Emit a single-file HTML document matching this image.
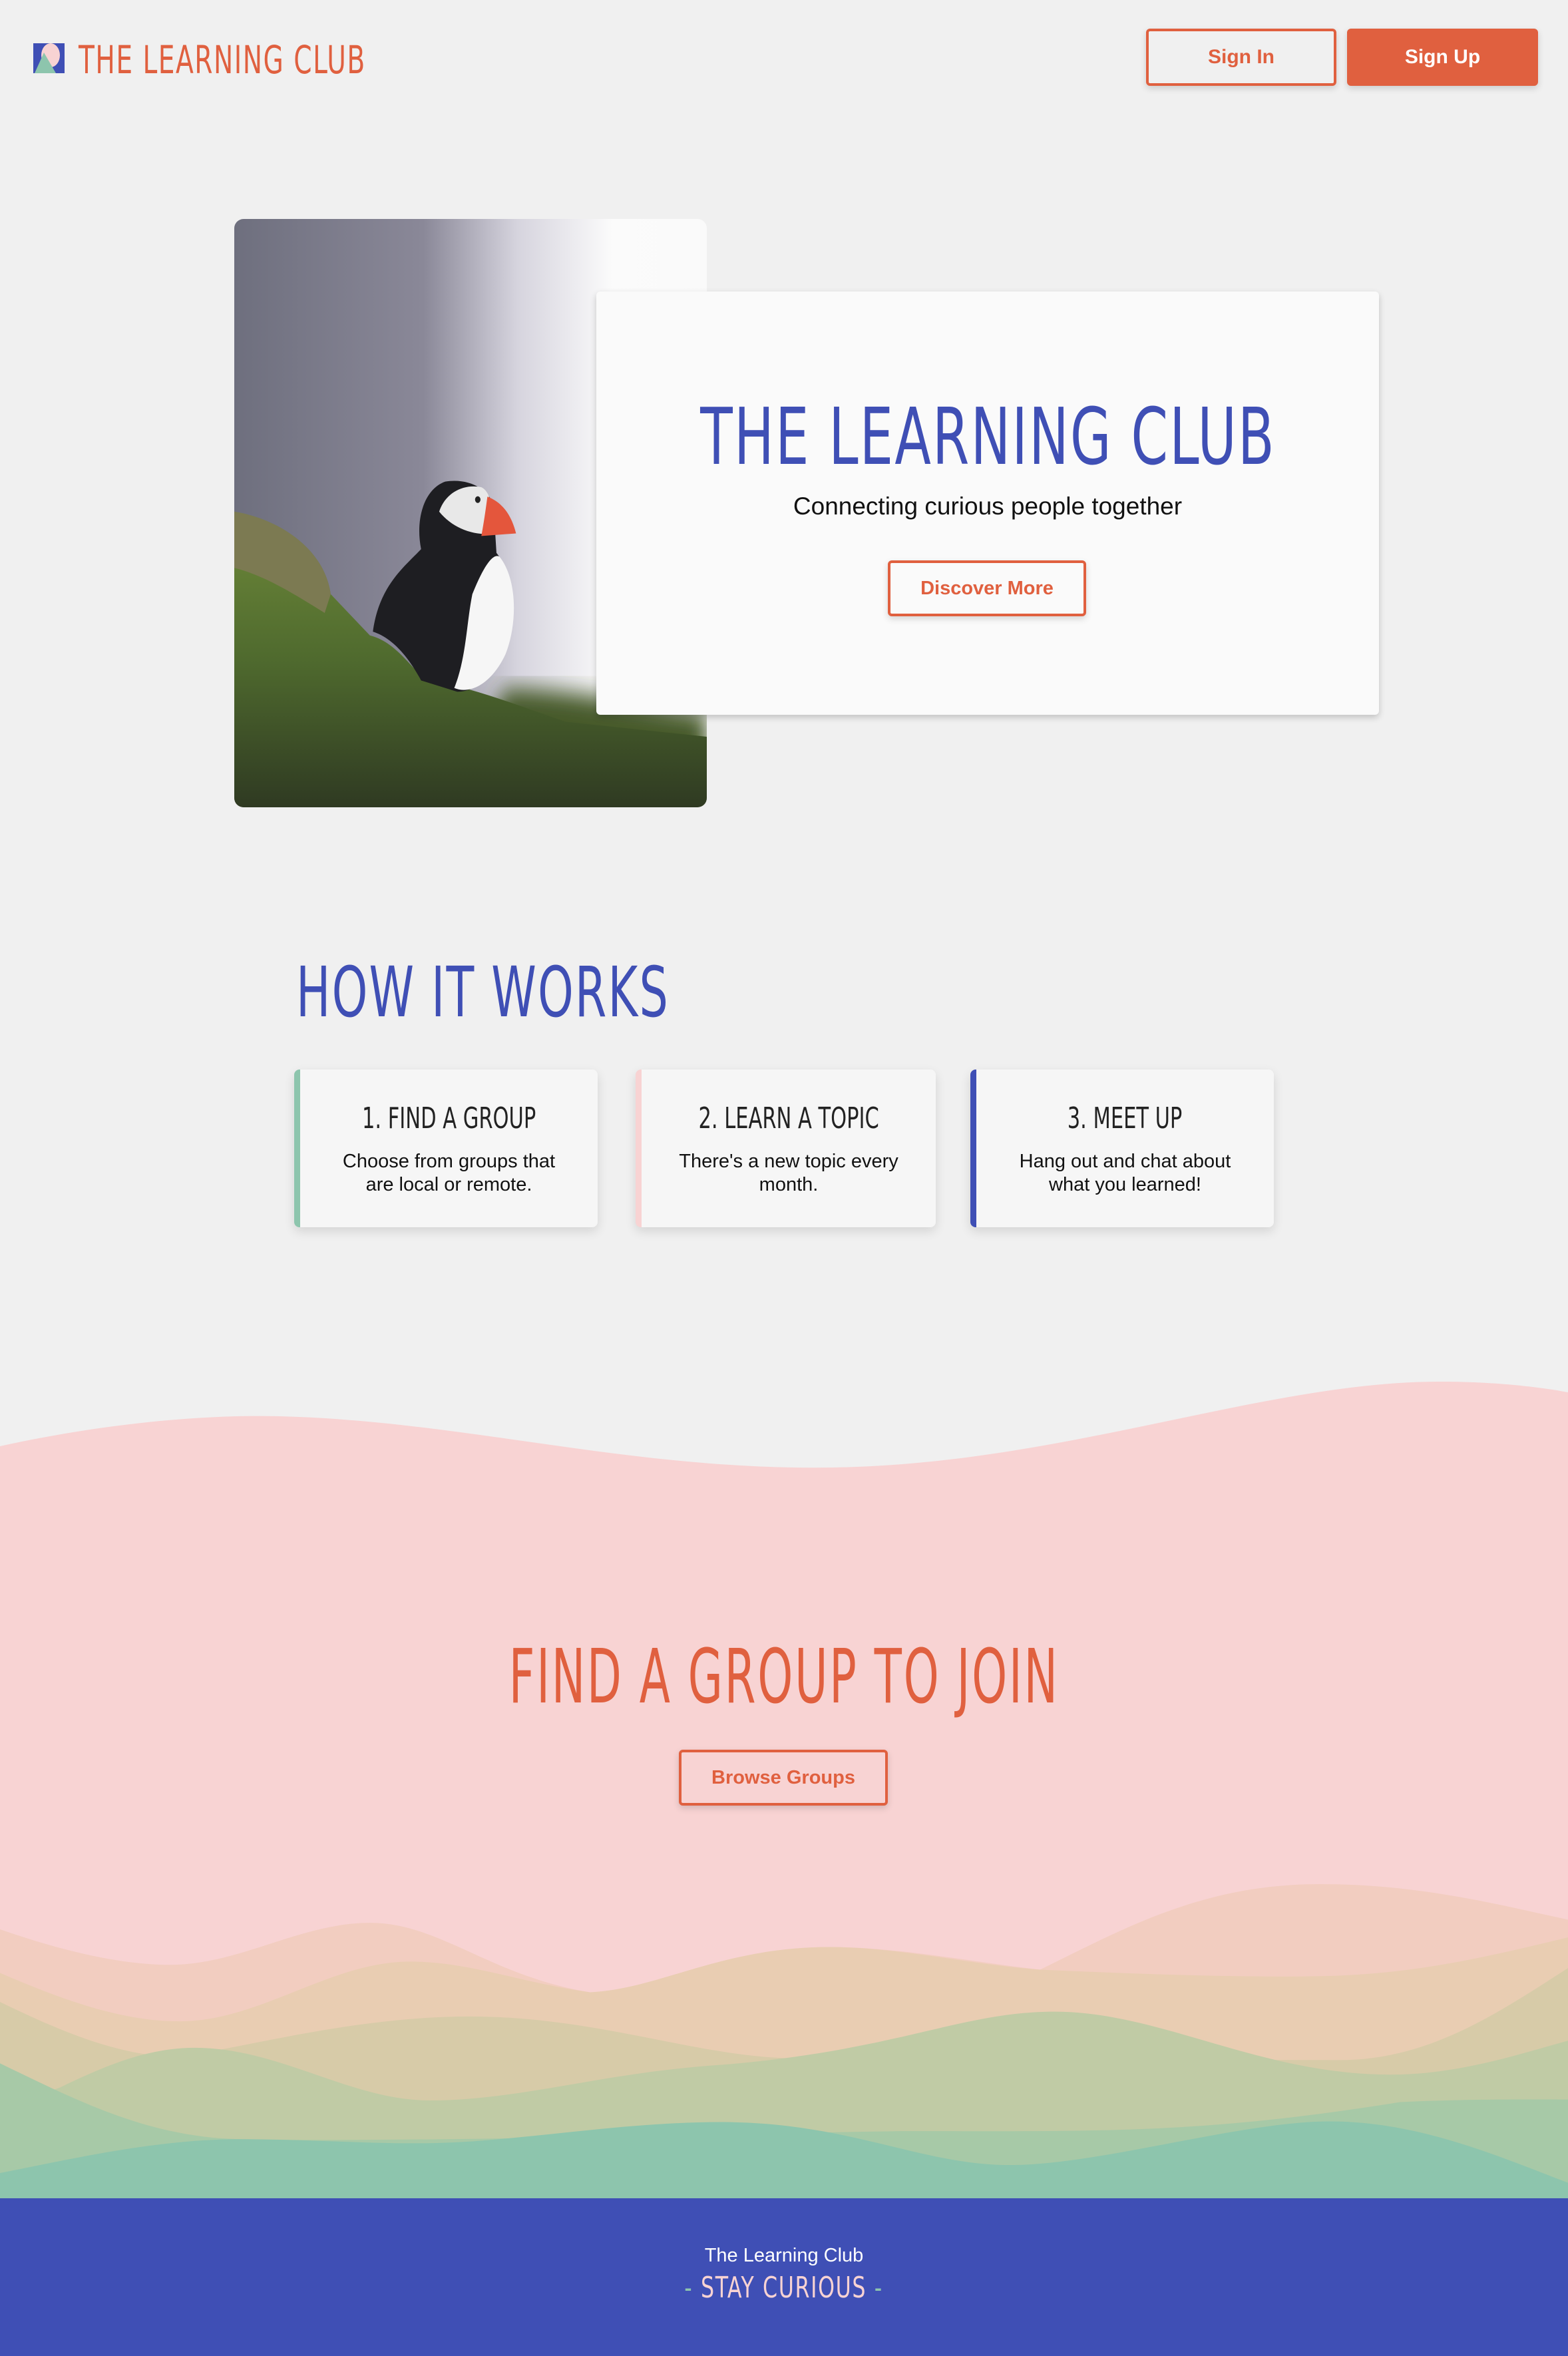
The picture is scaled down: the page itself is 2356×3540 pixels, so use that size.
<!DOCTYPE html>
<html><head><meta charset="utf-8"><style>
*{margin:0;padding:0;box-sizing:border-box}
body{width:2356px;height:3540px;background:#f0f0f0;position:relative;overflow:hidden;font-family:"Liberation Sans",sans-serif}
.disp{font-family:"DejaVu Sans Condensed","Liberation Sans",sans-serif}
.sx{display:inline-block;white-space:nowrap}
.abs{position:absolute}
.btn{position:absolute;border:4px solid #e0603f;border-radius:6px;color:#e0603f;font-weight:bold;display:flex;align-items:center;justify-content:center;box-shadow:0 4px 10px rgba(0,0,0,.15)}
.card{position:absolute;top:1607px;height:237px;background:#f6f6f6;border-radius:8px;box-shadow:0 6px 16px rgba(0,0,0,.12);text-align:center}
.card h3{font-weight:normal;font-size:44px;color:#222;margin-top:48px}
.card h3 .sx{transform:scaleX(.77)}
.card p{font-size:29px;line-height:35px;color:#111;margin-top:22px}
</style></head><body>
<!-- header -->
<svg class="abs" style="left:50px;top:65px" width="47" height="45" viewBox="0 0 47 45"><rect width="47" height="45" fill="#3f4fb5"/><ellipse cx="26" cy="18" rx="14" ry="18" fill="#f8d3d3"/><path d="M16 14 L34 45 L2 45 Z" fill="#8dc5ad"/></svg>
<div class="abs disp" style="left:118px;top:56px;font-size:58px;color:#e0603f;letter-spacing:2px"><span class="sx" style="transform:scaleX(.75);transform-origin:left">THE LEARNING CLUB</span></div>
<div class="btn" style="left:1722px;top:43px;width:286px;height:86px;font-size:30px;background:#f0f0f0">Sign In</div>
<div class="btn" style="left:2024px;top:43px;width:287px;height:86px;font-size:30px;background:#e0603f;color:#fff">Sign Up</div>
<!-- photo -->
<div class="abs" style="left:352px;top:329px;width:710px;height:884px;border-radius:14px;overflow:hidden">
<svg width="710" height="884" viewBox="0 0 1568 1568" preserveAspectRatio="none">
<defs>
<linearGradient id="bg" x1="0" y1="0" x2="1" y2="0"><stop offset="0" stop-color="#6e6f7e"/><stop offset=".4" stop-color="#8a8898"/><stop offset=".6" stop-color="#d6d4de"/><stop offset=".8" stop-color="#fbfbfb"/><stop offset="1" stop-color="#fafafa"/></linearGradient>
<linearGradient id="gr" x1="0" y1="0" x2="0" y2="1"><stop offset="0" stop-color="#6f8a3a"/><stop offset=".5" stop-color="#4f6a2e"/><stop offset="1" stop-color="#2f3a22"/></linearGradient>
<filter id="b"><feGaussianBlur stdDeviation="30"/></filter>
</defs>
<rect width="1568" height="1568" fill="url(#bg)"/>
<path d="M900 1250 C1100 1250 1400 1300 1568 1320 L1568 1568 L700 1568Z" fill="#465a2c" filter="url(#b)"/>
<path d="M0 780 C150 800 300 880 320 1000 L450 1110 C550 1130 600 1220 650 1230 C800 1250 950 1300 1100 1340 L1568 1380 L1568 1568 L0 1568Z" fill="url(#gr)"/>
<path d="M0 780 C150 800 300 880 320 1000 L300 1050 C200 1000 100 950 0 930Z" fill="#7c7a52"/>
<path d="M460 1100 C480 980 560 930 620 880 C600 800 630 720 700 700 C780 690 840 720 860 760 L870 890 C930 950 940 1050 900 1150 C860 1220 800 1260 740 1260 L620 1230 C560 1140 500 1110 460 1100Z" fill="#1e1e22"/>
<path d="M790 1000 C830 920 860 890 880 900 C940 960 940 1080 900 1160 C860 1230 790 1270 730 1250 C770 1170 770 1080 790 1000Z" fill="#f6f6f6"/>
<path d="M680 780 C700 730 760 705 820 715 C860 730 860 800 840 840 C780 840 720 820 680 780Z" fill="#e8e8e8"/>
<path d="M840 740 C890 755 920 790 935 838 L820 845 C830 800 835 770 840 740Z" fill="#e4563c"/>
<circle cx="808" cy="748" r="9" fill="#222"/>
</svg></div>
<!-- hero card -->
<div class="abs" style="left:896px;top:438px;width:1176px;height:636px;background:#fafafa;border-radius:6px;box-shadow:0 4px 10px rgba(0,0,0,.2);text-align:center">
<div class="disp" style="margin-top:158px;font-size:118px;line-height:120px;color:#3f4fb5;letter-spacing:3px"><span class="sx" style="transform:scaleX(.75)">THE LEARNING CLUB</span></div>
<div style="margin-top:24px;font-size:37px;color:#111">Connecting curious people together</div>
<div class="btn" style="left:438px;top:404px;width:298px;height:84px;font-size:29px;background:#fafafa">Discover More</div>
</div>
<!-- how it works -->
<div class="abs disp" style="left:445px;top:1430px;font-size:104px;color:#3f4fb5;letter-spacing:3px"><span class="sx" style="transform:scaleX(.73);transform-origin:left">HOW IT WORKS</span></div>
<div class="card" style="left:442px;width:456px;border-left:9px solid #8dc5ad"><h3 class="disp"><span class="sx">1. FIND A GROUP</span></h3><p>Choose from groups that<br>are local or remote.</p></div>
<div class="card" style="left:955px;width:451px;border-left:9px solid #f8d3d3"><h3 class="disp"><span class="sx">2. LEARN A TOPIC</span></h3><p>There's a new topic every<br>month.</p></div>
<div class="card" style="left:1458px;width:456px;border-left:9px solid #3f4fb5"><h3 class="disp"><span class="sx">3. MEET UP</span></h3><p>Hang out and chat about<br>what you learned!</p></div>
<!-- pink section -->
<svg class="abs" style="left:0;top:2050px" width="2356" height="1260" viewBox="0 2050 2356 1260"><path d="M0 2173 C150 2140 300 2125 420 2128 C700 2135 950 2210 1250 2205 C1600 2200 1900 2075 2166 2076 C2250 2076 2320 2085 2356 2092 L2356 3310 L0 3310Z" fill="#f8d3d3"/></svg>
<div class="abs disp" style="left:0;width:2356px;top:2455px;text-align:center;font-size:112px;color:#e0603f;letter-spacing:4px"><span class="sx" style="transform:scaleX(.67)">FIND A GROUP TO JOIN</span></div>
<div class="btn" style="left:1020px;top:2629px;width:314px;height:84px;font-size:29px;background:#f8d3d3">Browse Groups</div>
<svg class="abs" style="left:0;top:2780px" width="2356" height="524" viewBox="0 0 1568 1080" preserveAspectRatio="none">
<path d="M0,245 C60,310 120,355 170,355 C240,355 300,225 370,225 C440,225 490,390 590,440 C650,440 720,300 830,300 C900,300 980,350 1040,370 C1120,250 1200,105 1320,105 C1420,105 1500,170 1568,215 L1568,1080 L0,1080Z" fill="#f2cdc0"/>
<path d="M0,380 C60,460 120,530 180,530 C260,530 330,345 410,345 C470,345 520,410 590,440 C660,430 720,300 830,300 C900,300 970,355 1040,370 C1150,385 1250,395 1320,390 C1420,385 1500,320 1568,270 L1568,1080 L0,1080Z" fill="#e9cdb2"/>
<path d="M0,470 C60,560 120,640 180,640 C260,600 360,515 470,515 C600,515 700,645 800,645 C1000,640 1200,650 1340,650 C1430,650 1500,500 1568,365 L1568,1080 L0,1080Z" fill="#d7cba8"/>
<path d="M0,800 L60,735 C110,660 150,612 195,612 C280,612 350,775 430,775 C520,775 600,690 720,665 C900,620 960,500 1055,500 C1160,500 1260,695 1390,695 C1460,695 1520,630 1568,590 L1568,1080 L0,1080Z" fill="#c0cba5"/>
<path d="M0,660 C80,780 150,890 240,895 C400,905 700,880 900,870 C1100,870 1200,880 1400,780 C1470,770 1530,772 1568,772 L1568,1080 L0,1080Z" fill="#a7c9a7"/>
<path d="M0,1000 C80,950 160,895 240,895 C330,895 400,920 480,900 C560,880 640,842 720,842 C850,842 920,975 1010,975 C1100,975 1240,840 1330,840 C1420,840 1500,950 1568,1030 L1568,1080 L0,1080Z" fill="#8dc5ad"/>
</svg>
<!-- footer -->
<div class="abs" style="left:0;top:3303px;width:2356px;height:237px;background:#3f4fb5;text-align:center">
<div style="margin-top:70px;font-size:29px;color:#fff">The Learning Club</div>
<div class="disp" style="margin-top:6px;font-size:44px;color:#f8d3d3;letter-spacing:2px"><span class="sx" style="transform:scaleX(.8)"><span style="color:#8dc5ad">-</span> STAY CURIOUS <span style="color:#8dc5ad">-</span></span></div>
</div>
</body></html>
